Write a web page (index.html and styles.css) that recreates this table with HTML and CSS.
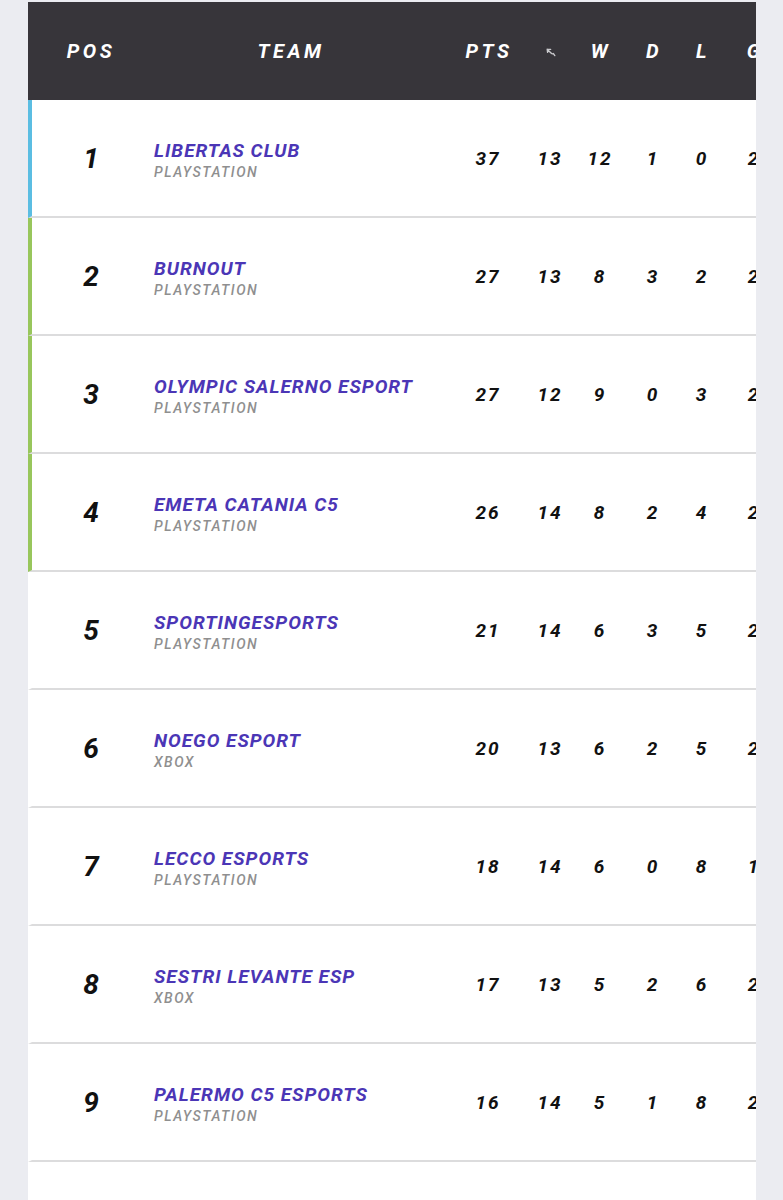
FILE: index.html
```html
<!DOCTYPE html>
<html lang="it">
<head>
<meta charset="utf-8">
<title>Classifica</title>
<link rel="stylesheet" href="styles.css">
</head>
<body>
<div class="standings">
  <div class="row head">
    <div class="c pos">POS</div>
    <div class="c team-h">TEAM</div>
    <div class="c">PTS</div>
    <div class="c"><svg class="gp-icon" width="10" height="9" viewBox="0 0 10 9"><path d="M1.2 1.2 L4.6 1.4 M1.2 1.2 L1.6 4.4 M1.4 1.4 L5 5 Q6.2 6.3 7.4 5.6 L8.8 7.6" fill="none" stroke="#c9c9cc" stroke-width="1.4" stroke-linecap="round" stroke-linejoin="round"/></svg></div>
    <div class="c">W</div>
    <div class="c">D</div>
    <div class="c">L</div>
    <div class="c">G</div>
  </div>

  <div class="row q-blue">
    <div class="c pos rank">1</div>
    <div class="c team"><span class="name">LIBERTAS CLUB</span><span class="platform">PLAYSTATION</span></div>
    <div class="c num">37</div><div class="c num">13</div><div class="c num">12</div><div class="c num">1</div><div class="c num">0</div><div class="c num">2</div>
  </div>
  <div class="row q-green">
    <div class="c pos rank">2</div>
    <div class="c team"><span class="name">BURNOUT</span><span class="platform">PLAYSTATION</span></div>
    <div class="c num">27</div><div class="c num">13</div><div class="c num">8</div><div class="c num">3</div><div class="c num">2</div><div class="c num">2</div>
  </div>
  <div class="row q-green">
    <div class="c pos rank">3</div>
    <div class="c team"><span class="name">OLYMPIC SALERNO ESPORT</span><span class="platform">PLAYSTATION</span></div>
    <div class="c num">27</div><div class="c num">12</div><div class="c num">9</div><div class="c num">0</div><div class="c num">3</div><div class="c num">2</div>
  </div>
  <div class="row q-green">
    <div class="c pos rank">4</div>
    <div class="c team"><span class="name">EMETA CATANIA C5</span><span class="platform">PLAYSTATION</span></div>
    <div class="c num">26</div><div class="c num">14</div><div class="c num">8</div><div class="c num">2</div><div class="c num">4</div><div class="c num">2</div>
  </div>
  <div class="row">
    <div class="c pos rank">5</div>
    <div class="c team"><span class="name">SPORTINGESPORTS</span><span class="platform">PLAYSTATION</span></div>
    <div class="c num">21</div><div class="c num">14</div><div class="c num">6</div><div class="c num">3</div><div class="c num">5</div><div class="c num">2</div>
  </div>
  <div class="row">
    <div class="c pos rank">6</div>
    <div class="c team"><span class="name">NOEGO ESPORT</span><span class="platform">XBOX</span></div>
    <div class="c num">20</div><div class="c num">13</div><div class="c num">6</div><div class="c num">2</div><div class="c num">5</div><div class="c num">2</div>
  </div>
  <div class="row">
    <div class="c pos rank">7</div>
    <div class="c team"><span class="name">LECCO ESPORTS</span><span class="platform">PLAYSTATION</span></div>
    <div class="c num">18</div><div class="c num">14</div><div class="c num">6</div><div class="c num">0</div><div class="c num">8</div><div class="c num">1</div>
  </div>
  <div class="row">
    <div class="c pos rank">8</div>
    <div class="c team"><span class="name">SESTRI LEVANTE ESP</span><span class="platform">XBOX</span></div>
    <div class="c num">17</div><div class="c num">13</div><div class="c num">5</div><div class="c num">2</div><div class="c num">6</div><div class="c num">2</div>
  </div>
  <div class="row">
    <div class="c pos rank">9</div>
    <div class="c team"><span class="name">PALERMO C5 ESPORTS</span><span class="platform">PLAYSTATION</span></div>
    <div class="c num">16</div><div class="c num">14</div><div class="c num">5</div><div class="c num">1</div><div class="c num">8</div><div class="c num">2</div>
  </div>
  <div class="row">
    <div class="c pos rank"></div>
    <div class="c team"></div>
  </div>
</div>
</body>
</html>
```

FILE: styles.css
```css
html, body {
  margin: 0;
  padding: 0;
  background: #ebecf1;
}
body {
  padding: 2px 0 0 28px;
  font-family: Roboto, "Noto Sans", "Liberation Sans", sans-serif;
  font-style: italic;
}
.standings {
  width: 728px;
  overflow: hidden;
  background: #fff;
}
.row {
  display: grid;
  grid-template-columns: 118px 306px 62px 62px 38px 68px 30px 74px;
  width: 762px;
  height: 116px;
  border-left: 4px solid #fff;
  border-bottom: 2px solid #dcdcdd;
  align-items: center;
}
.row.head {
  height: 98px;
  background: #37353a;
  border-left-color: #37353a;
  border-bottom: 0;
  color: #fff;
  font-weight: 700;
  font-size: 20px;
  letter-spacing: 3.5px;
}
.q-blue { border-left-color: #5bbde2; }
.q-green { border-left-color: #98c65c; }
.c {
  text-align: center;
}
.head .c { padding-left: 4px; }
.head .pos { padding-left: 4px; margin-left: -4px; }
.team-h { padding-right: 28px; }
.gp-icon { display: inline-block; vertical-align: middle; }
.rank {
  font-size: 28px;
  font-weight: 700;
  color: #111;
}
.team {
  text-align: left;
  display: flex;
  flex-direction: column;
  padding: 6px 0 0 4px;
}
.name {
  color: #4b36b6;
  font-weight: 700;
  font-size: 19px;
  line-height: 20px;
  letter-spacing: 1px;
}
.platform {
  color: #8f8f8f;
  font-weight: 500;
  font-size: 14px;
  line-height: 18px;
  margin-top: 2px;
  letter-spacing: 1.5px;
}
.num {
  font-size: 19px;
  font-weight: 700;
  color: #111;
  letter-spacing: 2px;
  padding-left: 2px;
}
```
